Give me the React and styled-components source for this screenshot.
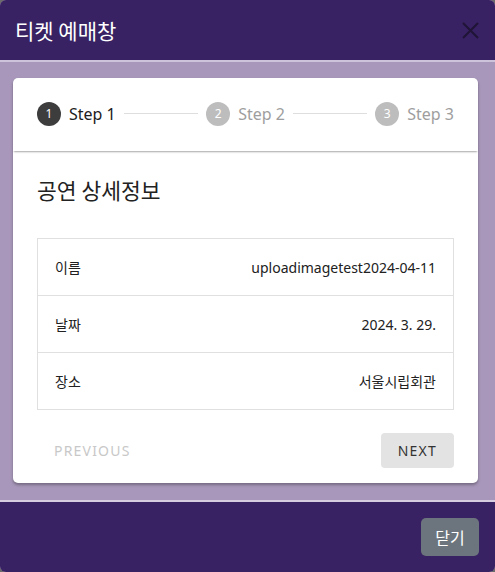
import React from 'react';
import styled, { createGlobalStyle } from 'styled-components';

const GlobalStyle = createGlobalStyle`
  html, body {
    margin: 0;
    padding: 0;
    background: #6b6b6b;
  }
  body {
    font-family: "Noto Sans", "Noto Sans CJK KR", sans-serif;
  }
`;

const Modal = styled.div`
  width: 495px;
  height: 572px;
  display: flex;
  flex-direction: column;
  border-radius: 6px;
  overflow: hidden;
  background: #a897ba;
`;

const Header = styled.div`
  height: 62px;
  flex-shrink: 0;
  display: flex;
  align-items: center;
  justify-content: space-between;
  padding: 0 16px 0 15px;
  background: #392263;
  border-bottom: 2px solid #cdc3da;
  box-sizing: border-box;
`;

const Title = styled.h5`
  margin: 0;
  color: #fff;
  font-family: "Noto Sans CJK KR", sans-serif;
  font-size: 21px;
  font-weight: 400;
  line-height: 1;
`;

const CloseButton = styled.button`
  border: 0;
  background: none;
  padding: 0;
  width: 17px;
  height: 17px;
  display: flex;
  color: #1c1230;
  opacity: 0.85;
`;

const Body = styled.div`
  flex: 1;
  padding: 16px 17px 16px 13px;
`;

const Card = styled.div`
  background: #fff;
  border-radius: 5px;
  box-shadow: 0 2px 3px rgba(0, 0, 0, 0.3);
  height: 405px;
  display: flex;
  flex-direction: column;
`;

const Stepper = styled.div`
  height: 73px;
  box-sizing: border-box;
  flex-shrink: 0;
  display: flex;
  align-items: center;
  padding: 0 24px 2px;
  box-shadow: 0 2px 2px -1px rgba(0, 0, 0, 0.35);
  border-radius: 5px 5px 0 0;
`;

const Step = styled.div`
  display: flex;
  align-items: center;
  gap: 8px;
`;

const StepIcon = styled.span`
  width: 24px;
  height: 24px;
  border-radius: 50%;
  background: ${({ active }) => (active ? '#3d3d3d' : '#bdbdbd')};
  color: #fff;
  font-size: 12px;
  display: flex;
  align-items: center;
  justify-content: center;
`;

const StepLabel = styled.span`
  font-size: 16px;
  color: ${({ active }) => (active ? '#212121' : '#9e9e9e')};
`;

const Connector = styled.span`
  flex: 1;
  height: 1px;
  background: #dedede;
  margin: 0 8px;
`;

const Content = styled.div`
  flex: 1;
  padding: 26px 24px 16px;
  display: flex;
  flex-direction: column;
`;

const SectionTitle = styled.h2`
  margin: 0 0 36px;
  font-family: "Noto Sans CJK KR", sans-serif;
  font-size: 21.5px;
  font-weight: 400;
  color: #222;
  line-height: 25px;
`;

const Table = styled.div`
  border: 1px solid #e0e0e0;
`;

const Row = styled.div`
  height: 56px;
  display: flex;
  align-items: center;
  justify-content: space-between;
  padding: 0 17px;
  font-size: 14px;
  color: #212121;
  & + & {
    border-top: 1px solid #e0e0e0;
  }
`;

const Actions = styled.div`
  margin-top: 23px;
  display: flex;
  justify-content: space-between;
  align-items: center;
`;

const TextButton = styled.button`
  border: 0;
  background: ${({ filled }) => (filled ? '#e3e3e3' : 'transparent')};
  color: ${({ disabled }) => (disabled ? '#c8c8c8' : '#333')};
  font-family: "Noto Sans", sans-serif;
  font-size: 14px;
  letter-spacing: 1.2px;
  height: 35px;
  padding: 0 17px;
  border-radius: 4px;
`;

const Footer = styled.div`
  height: 72px;
  flex-shrink: 0;
  display: flex;
  align-items: center;
  justify-content: flex-end;
  padding: 0 16px;
  background: #392263;
  border-top: 2px solid #d6cde0;
  box-sizing: border-box;
`;

const CloseAction = styled.button`
  border: 0;
  background: #6c757d;
  color: #fff;
  font-family: "Noto Sans CJK KR", sans-serif;
  font-size: 16px;
  width: 58px;
  height: 38px;
  border-radius: 5px;
`;

const steps = ['Step 1', 'Step 2', 'Step 3'];

const details = [
  { label: '이름', value: 'uploadimagetest2024-04-11' },
  { label: '날짜', value: '2024. 3. 29.' },
  { label: '장소', value: '서울시립회관' },
];

const App = () => (
  <React.Fragment>
    <GlobalStyle />
    <Modal>
      <Header>
        <Title>티켓 예매창</Title>
        <CloseButton aria-label='close'>
          <svg width='17' height='17' viewBox='0 0 17 17'>
            <path d='M1 1 L16 16 M16 1 L1 16' stroke='currentColor' strokeWidth='2' />
          </svg>
        </CloseButton>
      </Header>
      <Body>
        <Card>
          <Stepper>
            { steps.map((step, index) => (
              <React.Fragment key={ step }>
                { index > 0 && <Connector /> }
                <Step>
                  <StepIcon active={ index === 0 }>{ index + 1 }</StepIcon>
                  <StepLabel active={ index === 0 }>{ step }</StepLabel>
                </Step>
              </React.Fragment>
            )) }
          </Stepper>
          <Content>
            <SectionTitle>공연 상세정보</SectionTitle>
            <Table>
              { details.map((item) => (
                <Row key={ item.label }>
                  <span>{ item.label }</span>
                  <span>{ item.value }</span>
                </Row>
              )) }
            </Table>
            <Actions>
              <TextButton disabled>PREVIOUS</TextButton>
              <TextButton filled>NEXT</TextButton>
            </Actions>
          </Content>
        </Card>
      </Body>
      <Footer>
        <CloseAction>닫기</CloseAction>
      </Footer>
    </Modal>
  </React.Fragment>
);

export default App;
